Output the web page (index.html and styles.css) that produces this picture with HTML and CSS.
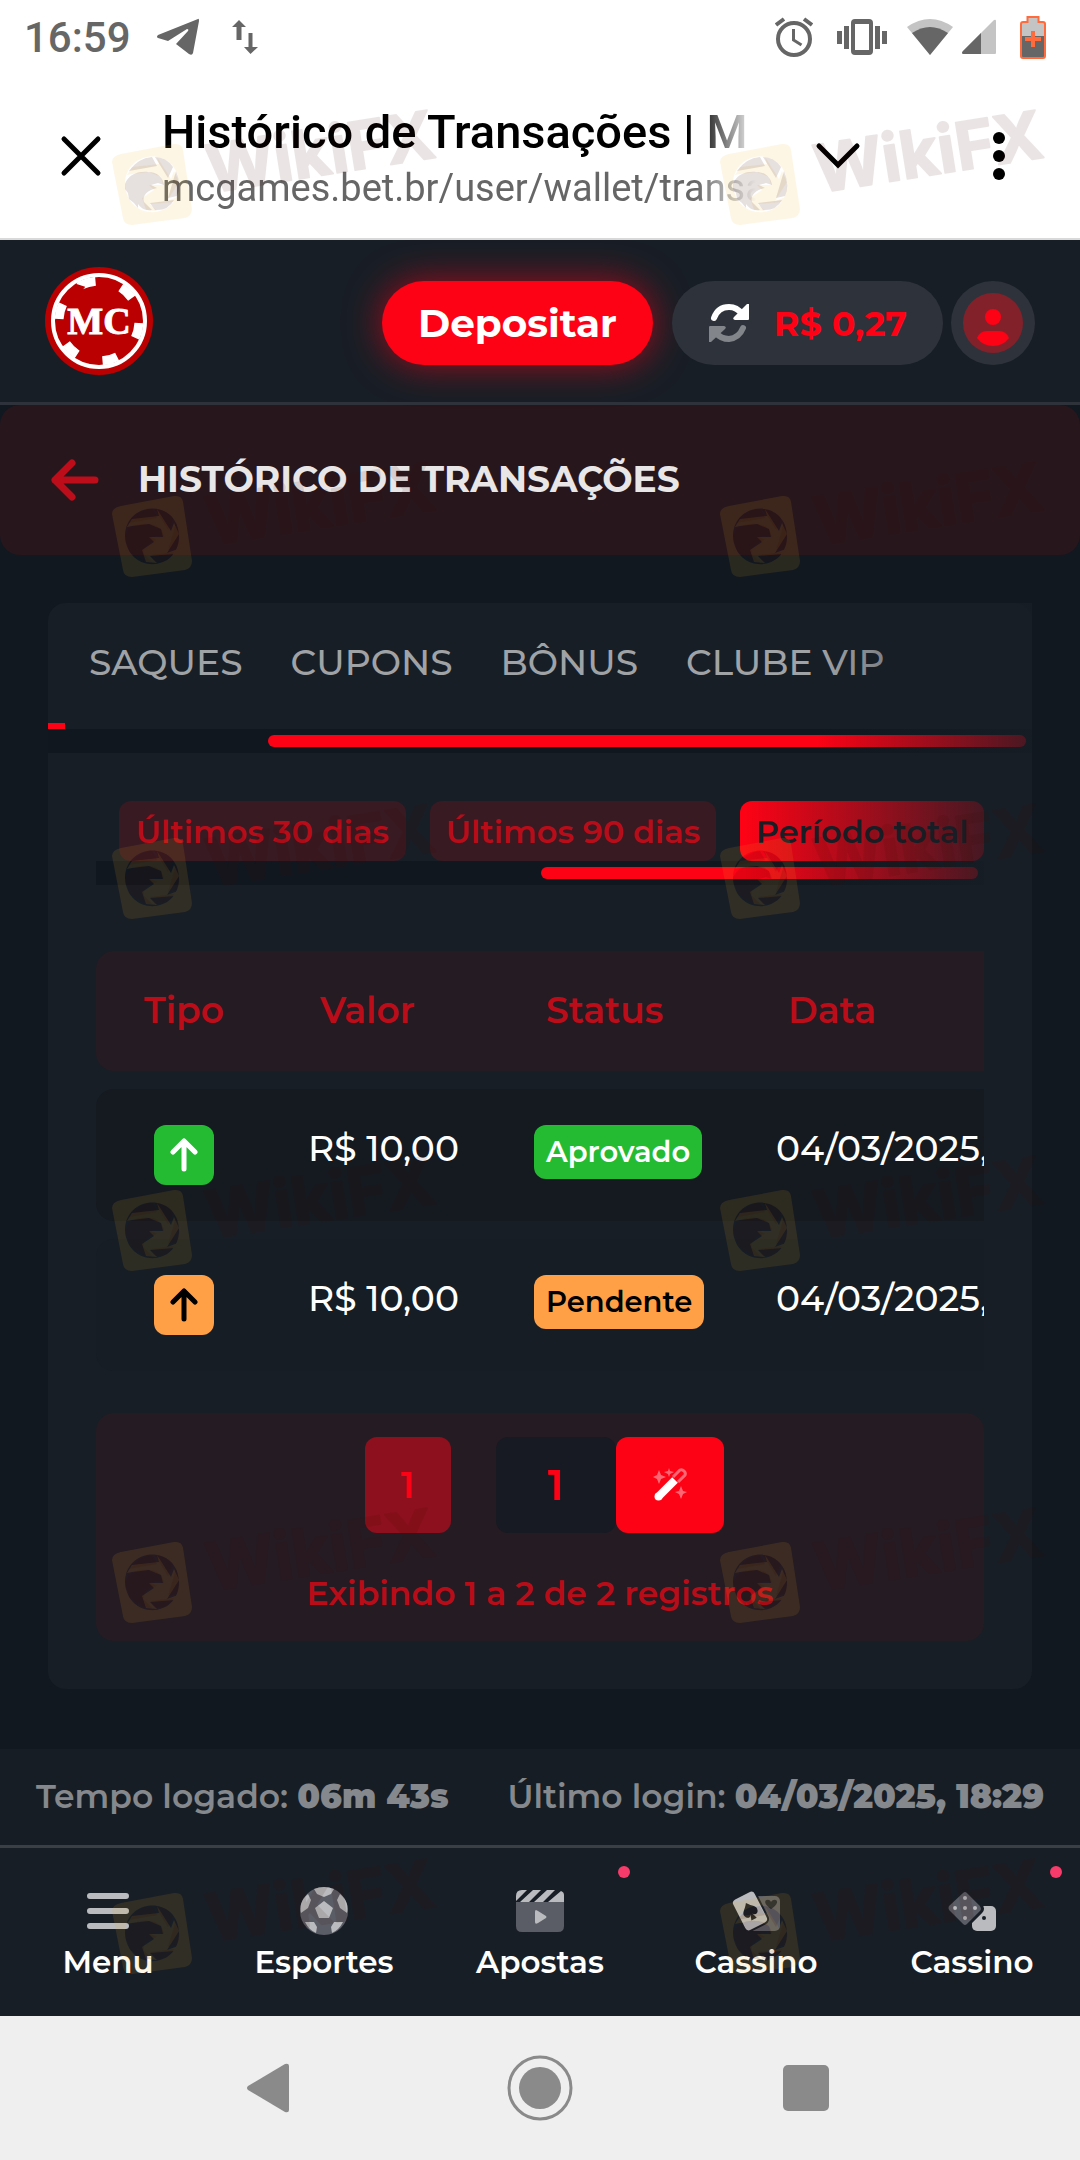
FILE: index.html
```html
<!DOCTYPE html>
<html lang="pt-BR">
<head>
<meta charset="UTF-8" />
<meta name="viewport" content="width=device-width, initial-scale=1.0" />
<title>Histórico de Transações | MC Games</title>
<link rel="stylesheet" href="styles.css">
</head>
<body>
  <div class="status-bar">
    <span class="clock">16:59</span>
    <svg class="telegram" width="44" height="38" viewBox="0 0 44 38"><path fill="#666" d="M42 1 2 17q-2 2 0 3l10 3L31 11q2 0 1 2L20 26l13 10q3 2 4-1L43 3q0-3-1-2z"/></svg>
    <svg width="26" height="36" viewBox="0 0 26 36" fill="#666"><path d="M7 1 14 8H9.500V21H4.500V8H0zM18.500 35 12 28h4.500V14h4V28H26z"/></svg>
    <div class="status-right">
      <svg width="38" height="40" viewBox="0 0 38 40" fill="none" stroke="#666" stroke-width="4"><circle cx="19" cy="22" r="16"/><path d="M1 8 9 2M29 2l8 6"/><path stroke-width="3" d="M18.500 12v11l8 5"/></svg>
      <svg class="vibrate" width="50" height="38" viewBox="0 0 50 38" fill="#666"><path fill-rule="evenodd" d="M18 1h14q4 0 4 4v28q0 4-4 4H18q-4 0-4-4V5q0-4 4-4zm0 5v26h14V6zM0 13h5v13H0zM7 8h5v23H7zM38 8h5v23h-5zM45 13h5v13h-5z"/></svg>
      <svg width="46" height="38" viewBox="0 0 46 38"><path fill="#c4c4c4" d="M0 9Q23-7 46 9L23 37z"/><path fill="#666" d="M5 15Q23 3 41 15L23 37z"/></svg>
      <svg width="36" height="36" viewBox="0 0 36 36"><path fill="#c4c4c4" d="M35 2v32q0 1-1 1H2q-2-1 0-3L33 1q2-1 2 1z"/><path fill="#666" d="M20 14v21H2q-2-1 0-3z"/></svg>
      <svg class="battery" width="26" height="44" viewBox="0 0 26 44"><path fill="#c4c4c4" d="M8 2h10v5h6v14H2V7h6z"/><path fill="#666" d="M2 21h22v21H2z"/><path fill="none" stroke="#ff6b3d" stroke-width="2" d="M7.500 2h11v5H23q2 0 2 2v32q0 2-2 2H3q-2 0-2-2V9q0-2 2-2h4.500z"/><path stroke="#ff6b3d" stroke-width="4" d="M13 16v16M5 24h16"/></svg>
    </div>
  </div>

  <div class="browser-bar">
    <button class="icon-button" aria-label="Fechar">
      <svg width="42" height="42" viewBox="0 0 42 42" stroke="#000" stroke-width="5" stroke-linecap="round"><path d="m4 4 34 34M38 4 4 38"/></svg>
    </button>
    <div class="page-info">
      <div class="page-title">Histórico de Transações | M</div>
      <div class="page-url">mcgames.bet.br/user/wallet/transa</div>
    </div>
    <button class="icon-button" aria-label="Minimizar">
      <svg width="46" height="28" viewBox="0 0 46 28" fill="none" stroke="#000" stroke-width="5" stroke-linecap="round"><path d="m4 4 19 19L42 4"/></svg>
    </button>
    <button class="icon-button more" aria-label="Mais opções">
      <svg width="12" height="48" viewBox="0 0 12 48"><circle cx="6" cy="6" r="6"/><circle cx="6" cy="24" r="6"/><circle cx="6" cy="42" r="6"/></svg>
    </button>
  </div>

  <header class="site-header">
    <a class="logo" href="#" aria-label="MC Games">
      <svg width="108" height="108" viewBox="-54 -54 108 108">
        <circle r="54" fill="#ba0000"/>
        <circle r="46" fill="none" stroke="#fff" stroke-width="4"/>
        <circle r="40" fill="none" stroke="#fff" stroke-width="9" pathLength="360" stroke-dasharray="22 38" transform="rotate(-117)"/>
        <text class="logo-text" y="13" text-anchor="middle">MC</text>
      </svg>
    </a>
    <button class="deposit">Depositar</button>
    <button class="balance">
      <svg width="42" height="40" viewBox="0 0 42 40"><path fill="none" stroke="#fff" stroke-width="6" stroke-linecap="round" d="M6 15Q10 4 21 4q8 0 13 7"/><path fill="#fff" d="m40 1 1 0v15q0 1-1 1H27q-3-1-1-3L39 1z"/><g fill="none" opacity=".4"><path stroke="#fff" stroke-width="6" stroke-linecap="round" d="M35 25q-4 10-14 11-8 0-13-6"/><path fill="#fff" d="M1 39V24q0-1 1-1h14q3 1 1 3L3 39z"/></g></svg>
      <span>R$ 0,27</span>
    </button>
    <button class="avatar" aria-label="Minha conta">
      <svg width="60" height="60" viewBox="0 0 60 60"><circle cx="30" cy="30" r="30" fill="#83212b"/><circle cx="30" cy="24" r="8" fill="#fd0215"/><path fill="#fd0215" d="M14 45q3-7 10-7h12q7 0 10 7-6 8-16 8t-16-8z"/></svg>
    </button>
  </header>

  <div class="title-band">
    <a href="#" aria-label="Voltar"><svg width="48" height="42" viewBox="0 0 48 42" fill="none" stroke="#be0d1a" stroke-width="7" stroke-linecap="round" stroke-linejoin="round"><path d="M44 21H4M21 4 4 21l17 17"/></svg></a>
    <h1>HISTÓRICO DE TRANSAÇÕES</h1>
  </div>

  <main class="card">
    <div class="scroller">
      <nav class="tabs">
        <a href="#">SAQUES</a>
        <a href="#">CUPONS</a>
        <a href="#">BÔNUS</a>
        <a href="#">CLUBE VIP</a>
      </nav>
      <div class="track tabs-track"><div class="thumb"></div></div>
    </div>

    <div class="content">
      <div class="scroller filters-scroller">
        <div class="filters">
          <button>Últimos 30 dias</button>
          <button>Últimos 90 dias</button>
          <button class="active">Período total</button>
        </div>
        <div class="track filters-track"><div class="thumb"></div></div>
      </div>

      <div class="table-wrap">
        <table>
          <thead>
            <tr><th class="type">Tipo</th><th class="value">Valor</th><th class="status">Status</th><th class="date">Data</th></tr>
          </thead>
          <tbody>
            <tr class="odd">
              <td class="type"><span class="arrow approved"><svg width="28" height="34" viewBox="0 0 28 34" fill="none" stroke="currentColor" stroke-width="5" stroke-linecap="round" stroke-linejoin="round"><path d="M14 31V3M3 14 14 3l11 11"/></svg></span></td>
              <td>R$ 10,00</td>
              <td><span class="badge approved">Aprovado</span></td>
              <td>04/03/2025,</td>
            </tr>
            <tr>
              <td class="type"><span class="arrow pending"><svg width="28" height="34" viewBox="0 0 28 34" fill="none" stroke="currentColor" stroke-width="5" stroke-linecap="round" stroke-linejoin="round"><path d="M14 31V3M3 14 14 3l11 11"/></svg></span></td>
              <td>R$ 10,00</td>
              <td><span class="badge pending">Pendente</span></td>
              <td>04/03/2025,</td>
            </tr>
          </tbody>
        </table>
      </div>

      <div class="pagination">
        <div class="pages">
          <button class="page">1</button>
          <div class="goto">
            <input type="text" value="1" aria-label="Página">
            <button aria-label="Ir para a página">
              <svg width="34" height="34" viewBox="0 0 34 34"><path stroke="#fff" stroke-width="8" d="M5 29 22 12"/><circle cx="5.500" cy="28.500" r="4" fill="#fff"/><g opacity=".4"><path fill="none" stroke="#fff" stroke-width="3" d="m20 9 7-7q2-1 4 1t1 4l-7 7"/><path fill="#fff" d="m6 2 2 5 5 2-5 2-2 5-2-5-4-2 4-2zM16 0l1 3 4 1-4 2-1 3-1-3-4-2 4-1zM28 18l2 5 4 1-4 2-2 5-2-5-4-2 4-1z"/></g></svg>
            </button>
          </div>
        </div>
        <p>Exibindo 1 a 2 de 2 registros</p>
      </div>
    </div>
  </main>

  <footer class="session">
    <span>Tempo logado: <b>06m 43s</b></span>
    <span>Último login: <b>04/03/2025, 18:29</b></span>
  </footer>

  <nav class="bottom-nav">
    <a href="#">
      <svg width="48" height="48" viewBox="0 0 48 48" stroke="#b9bbbe" stroke-width="6" stroke-linecap="round"><path d="M6 9h36M6 24h36M6 39h36"/></svg>
      Menu
    </a>
    <a href="#">
      <svg width="48" height="48" viewBox="0 0 48 48"><circle cx="24" cy="24" r="24" fill="#5b5d66"/><path fill="#b9bbbe" d="m24 14 9 7-4 10H19l-4-10zM14 2q10-4 20 0l-3 5-7 3-7-3zM1 17q2-6 7-10l3 6-3 8-7 5q-1-4 0-9zM47 17q-2-6-7-10l-3 6 3 8 7 5q1-4 0-9zM5 35h9l3 5-1 6Q9 43 5 35zM43 35h-9l-3 5 1 6q7-3 11-11z"/></svg>
      Esportes
    </a>
    <a href="#">
      <svg width="48" height="48" viewBox="0 0 48 48"><path fill="#5b5d66" d="M0 15h48v24q0 6-6 6H6q-6 0-6-6z"/><path fill="#b9bbbe" d="M6 3h5L0 14V9q0-6 6-6zM17 3h8L13 15H4zM31 3h8L27 15h-9zM45 4q3 1 3 4v7H32zM20 23q-1 0-1 2v10q0 3 3 1l8-5q1-1 0-2l-8-5z"/></svg>
      Apostas
      <i class="dot"></i>
    </a>
    <a href="#">
      <svg width="48" height="48" viewBox="0 0 48 48"><rect x="16" y="9" width="32" height="35" rx="5" fill="#5b5d66"/><path fill="#202730" d="M39 22c-12-8-2-12 0-7 3-5 12-1 0 7z"/><g transform="rotate(-27 18 24)"><rect x="5" y="6" width="26" height="36" rx="5" fill="#b9bbbe" stroke="#181e26" stroke-width="2"/><path fill="#181e26" d="M18 15c-4 6-9 7-7 12 1 3 5 3 6 0l-2 6h6l-2-6c1 3 5 3 6 0 2-5-3-6-7-12z"/></g></svg>
      Cassino
    </a>
    <a href="#">
      <svg width="48" height="48" viewBox="0 0 48 48"><rect x="24" y="19" width="24" height="25" rx="5" fill="#b9bbbe"/><path fill="#5b5d66" stroke="#181e26" stroke-width="3" stroke-linejoin="round" d="M14 5q3-3 6 0l13 13q3 4 0 7L20 38q-3 3-6 0L0 24q-2-3 0-6z"/><g fill="#b9bbbe"><circle cx="17" cy="11" r="2"/><circle cx="7" cy="21" r="2"/><circle cx="17" cy="21" r="2"/><circle cx="27" cy="21" r="2"/><circle cx="17" cy="31" r="2"/></g><circle cx="36" cy="31" r="2" fill="#181e26"/></svg>
      Cassino
      <i class="dot"></i>
    </a>
  </nav>

  <div class="system-nav">
    <button aria-label="Voltar"><svg width="66" height="66" viewBox="0 0 66 66"><path fill="#8a8a8a" d="M44 9q4-1 4 2v44q0 3-4 2L7 35q-2-2 0-4z"/></svg></button>
    <button aria-label="Início"><svg width="66" height="66" viewBox="0 0 66 66"><circle cx="33" cy="33" r="31" fill="none" stroke="#8a8a8a" stroke-width="3"/><circle cx="33" cy="33" r="21" fill="#8a8a8a"/></svg></button>
    <button aria-label="Recentes"><svg width="66" height="66" viewBox="0 0 66 66"><rect x="10" y="10" width="46" height="46" rx="5" fill="#8a8a8a"/></svg></button>
  </div>

  <svg class="watermark" aria-hidden="true">
    <defs>
      <g id="mark">
        <g fill="#f0b020" opacity=".11">
          <path fill-rule="evenodd" d="M-31-30 22-40q8-1 9 6L40 25q0 7-7 9L-20 41q-8 0-9-7L-40-22q0-6 9-8zM-27 0C-25 38 27 37 27 0 26-37-26-36-27 0z"/>
          <path d="M-25-9-20-17 7-20 5-27 19-5 22-13 27-2 15 17 26 13 22 18-2 20 5 27-6 26-10 14 2 6-3 1 11 1 9-7-3-12-20-10z"/>
        </g>
        <g fill="#3a0a00" opacity=".12">
          <path d="M-23-13Q-14-26 0-27L5-18zM3-27q11 0 18 10l-5 11zM24-13q6 14 1 25l-9 2zM-2 19l24-3Q16 27 3 26z"/>
          <path d="M-27 0C-24-8-16-13-4-12 6-12 11-6 12 1L6-1-1 1l6 3C-5 6-10 12-8 18L0 26C-7 27-11 24-14 20L-14 24-18 19-23 15-24 9-27 5z"/>
        </g>
        <text class="mark-text" x="56" y="18" transform="rotate(-9)">WikiFX</text>
      </g>
    </defs>
    <use href="#mark" x="152" y="184"/><use href="#mark" x="760" y="184"/>
    <use href="#mark" x="152" y="536"/><use href="#mark" x="760" y="536"/>
    <use href="#mark" x="152" y="878"/><use href="#mark" x="760" y="878"/>
    <use href="#mark" x="152" y="1230"/><use href="#mark" x="760" y="1230"/>
    <use href="#mark" x="152" y="1582"/><use href="#mark" x="760" y="1582"/>
    <use href="#mark" x="152" y="1933"/><use href="#mark" x="760" y="1933"/>
  </svg>
</body>
</html>
```
FILE: styles.css
```css
* {
  box-sizing: border-box;
}

body {
  margin: 0;
  position: relative;
  font-family: Montserrat, Inter, sans-serif;
  background-color: #111820;
  color: #fff;
}

svg {
  display: block;
  flex: none;
}

a {
  color: inherit;
  text-decoration: none;
}

button {
  font-family: inherit;
  border: none;
  padding: 0;
  background: none;
  cursor: pointer;
}

/* android */
.status-bar {
  display: flex;
  align-items: center;
  height: 74px;
  padding: 0 34px 0 24px;
  background-color: #fff;
  color: #666;
  font-family: Roboto, sans-serif;
}

.clock {
  font-size: 42px;
  font-weight: 500;
}

.telegram {
  margin: 0 32px 0 25px;
}

.status-right {
  display: flex;
  align-items: center;
  gap: 8px;
  margin-left: auto;
}

.vibrate {
  margin: 0 12px 0 16px;
}

.battery {
  margin-left: 15px;
}

.browser-bar {
  display: flex;
  align-items: center;
  height: 166px;
  padding: 0 75px 0 60px;
  border-bottom: 2px solid #d9d9d9;
  background-color: #fff;
  font-family: Roboto, sans-serif;
}

.page-info {
  flex: 1;
  margin: 0 59px 0 60px;
  padding-top: 6px;
  overflow: hidden;
  white-space: nowrap;
  mask-image: linear-gradient(to right, #000 calc(100% - 60px), transparent);
}

.page-title {
  font-size: 47px;
  font-weight: 500;
  line-height: 58px;
  color: #000;
}

.page-url {
  font-size: 38px;
  line-height: 54px;
  color: #666;
}

.more {
  margin-left: 132px;
}

/* cabeçalho */
.site-header {
  display: flex;
  align-items: center;
  height: 165px;
  padding: 4px 45px 0;
  background-color: #181e26;
  border-bottom: 3px solid #2e333b;
}

.logo {
  margin: 0 auto 4px 0;
}

.logo-text {
  font-family: "Liberation Serif", serif;
  font-size: 38px;
  font-weight: bold;
  fill: #fff;
  stroke: #fff;
}

.deposit {
  height: 84px;
  padding: 0 36px;
  border-radius: 42px;
  background-color: #fd0215;
  box-shadow: 0 0 36px #fd021599;
  color: #fff;
  font-size: 39px;
  font-weight: 700;
}

.balance {
  display: flex;
  align-items: center;
  gap: 24px;
  height: 84px;
  margin: 0 8px 0 19px;
  padding: 0 36px;
  border-radius: 42px;
  background-color: #2e333b;
  color: #fd0215;
  font-size: 35px;
  font-weight: 700;
}

.avatar {
  padding: 12px;
  border-radius: 50%;
  background-color: #2e333b;
}

.title-band {
  display: flex;
  align-items: center;
  gap: 39px;
  height: 150px;
  padding: 0 51px;
  border-radius: 20px;
  background-color: #27161c;
}

h1 {
  margin: 0;
  padding-bottom: 3px;
  font-size: 36px;
  font-weight: 700;
  color: #e9e6e8;
}

/* cartão */
.card {
  margin: 48px 48px 60px;
  border-radius: 18px;
  background-color: #181e26;
}

.scroller {
  position: relative;
}

.scroller::after {
  content: "";
  position: absolute;
  inset: 0 0 0 auto;
  width: 22%;
  background: linear-gradient(to right, transparent, #181e26cc);
}

.tabs {
  display: flex;
  gap: 48px;
  height: 126px;
  padding: 38px 41px 0;
  font-size: 36px;
  font-weight: 500;
  line-height: 42px;
  color: #a0a3a6;
  background: linear-gradient(#fd0215, #fd0215) left bottom / 17px 6px no-repeat;
}

.track {
  padding: 6px;
  background-color: #11171f;
}

.thumb {
  height: 12px;
  border-radius: 6px;
  background-color: #fd0215;
}

.tabs-track {
  padding-left: 220px;
}

.content {
  padding: 48px;
}

.filters {
  display: flex;
  gap: 24px;
  padding-left: 23px;
}

.filters button {
  flex: 287 0 0;
  height: 60px;
  border-radius: 12px;
  background-color: #381a22;
  color: #b90c19;
  font-size: 32px;
  font-weight: 600;
  white-space: nowrap;
}

.filters .active {
  flex-grow: 244;
  background-color: #fd0215;
  color: #181e26;
}

.filters-scroller::after {
  width: 27%;
}

.filters-track {
  padding-left: 445px;
}

.table-wrap {
  margin: 48px 0 24px;
  overflow: hidden;
}

table {
  width: 960px;
  table-layout: fixed;
  border-spacing: 0 18px;
  font-size: 36px;
}

th {
  height: 120px;
  padding: 0 0 2px 48px;
  background-color: #251b23;
  color: #bb0c19;
  font-weight: 600;
  text-align: left;
}

td {
  height: 132px;
  padding: 36px 0 0 36px;
  vertical-align: top;
  font-weight: 500;
  line-height: 46px;
  background-color: #161d24;
}

.odd td {
  background-color: #151920;
}

th.type,
td.type {
  width: 176px;
  padding-left: 0;
  border-radius: 18px 0 0 18px;
  text-align: center;
}

.value {
  width: 226px;
}

.status {
  width: 242px;
}

.arrow {
  display: inline-flex;
  align-items: center;
  justify-content: center;
  width: 60px;
  height: 60px;
  border-radius: 12px;
}

.badge {
  display: inline-block;
  padding: 0 12px;
  border-radius: 12px;
  font-size: 29px;
  font-weight: 600;
  line-height: 54px;
  vertical-align: top;
}

.approved {
  background-color: #24bb33;
  color: #fff;
}

.pending {
  background-color: #ffa047;
  color: #000;
}

.pagination {
  padding: 24px;
  border-radius: 18px;
  background-color: #251b23;
  text-align: center;
}

.pages {
  display: flex;
  justify-content: center;
  gap: 45px;
  padding-left: 8px;
}

.page {
  width: 86px;
  height: 96px;
  border-radius: 12px;
  background-color: #8c101d;
  color: #fd0215;
  font-size: 36px;
  font-weight: 600;
}

.goto {
  display: flex;
}

.goto input {
  width: 120px;
  height: 96px;
  padding: 0;
  border: none;
  border-radius: 12px;
  background-color: #171a22;
  color: #fd0215;
  font-family: inherit;
  font-size: 42px;
  font-weight: 600;
  text-align: center;
}

.goto button {
  display: flex;
  align-items: center;
  justify-content: center;
  width: 108px;
  border-radius: 12px;
  background-color: #fd0215;
}

.pagination p {
  margin: 36px 0 0;
  font-size: 33px;
  font-weight: 600;
  line-height: 48px;
  color: #b90c19;
}

.session {
  display: flex;
  justify-content: space-between;
  height: 96px;
  padding: 24px 36px;
  background-color: #161d24;
  color: #85888c;
  font-size: 33px;
  font-weight: 600;
  line-height: 46px;
  white-space: nowrap;
}

.session b {
  font-weight: 900;
}

.bottom-nav {
  display: grid;
  grid-template-columns: repeat(5, 1fr);
  height: 171px;
  border-top: 3px solid #3a3e45;
  background-color: #181e26;
}

.bottom-nav a {
  position: relative;
  display: flex;
  flex-direction: column;
  align-items: center;
  gap: 7px;
  padding-top: 39px;
  font-size: 31px;
  font-weight: 600;
  line-height: 40px;
}

.dot {
  position: absolute;
  top: 18px;
  right: 18px;
  width: 12px;
  height: 12px;
  border-radius: 50%;
  background-color: #f73b6a;
}

.system-nav {
  display: flex;
  justify-content: center;
  gap: 200px;
  padding: 39px 0;
  background-color: #efefef;
}

.watermark {
  position: absolute;
  inset: 0;
  width: 100%;
  height: 100%;
  pointer-events: none;
}

.mark-text {
  font-family: Inter, sans-serif;
  font-size: 66px;
  font-weight: 700;
  fill: #3a0a00;
  stroke: #3a0a00;
  stroke-width: 2px;
  stroke-linejoin: round;
  opacity: 0.1;
}
```
